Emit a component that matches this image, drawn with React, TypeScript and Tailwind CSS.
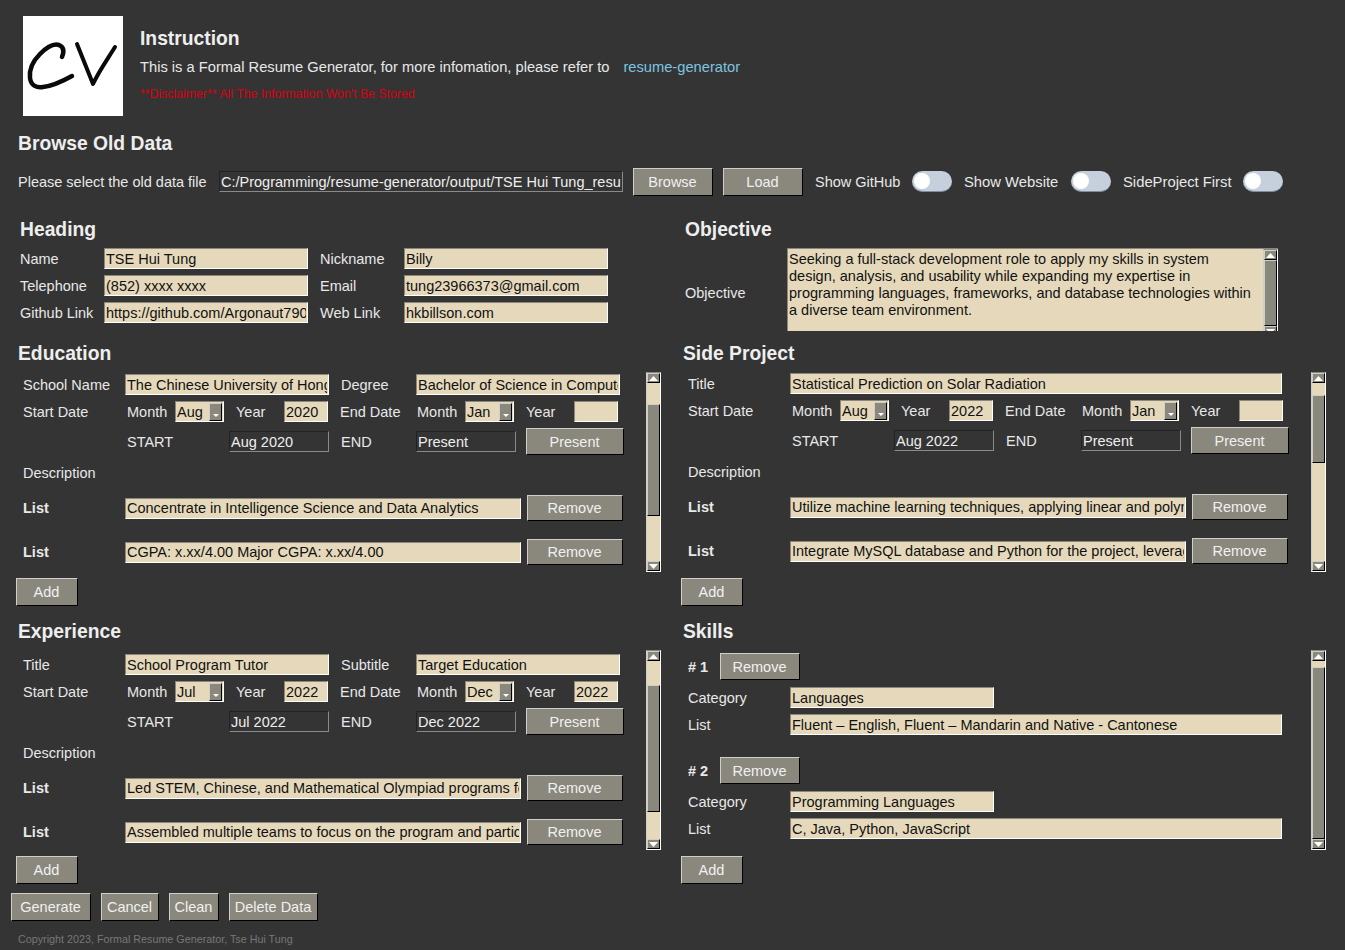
import React from 'react';

const Field = ({ value = '', className = '' }: { value?: string; className?: string }) => (
  <input
    readOnly
    value={value}
    className={`h-[21px] shrink-0 border border-t-[#8a887d] border-l-[#8a887d] border-r-white border-b-white bg-[#e6d9bb] px-px text-[#111] outline-none ${className}`}
  />
);

const ReadOnly = ({ value }: { value: string }) => (
  <input
    readOnly
    value={value}
    className="h-[21px] w-[100px] shrink-0 border border-t-[#222] border-l-[#222] border-r-[#8a8a8a] border-b-[#8a8a8a] bg-[#343434] px-px text-[#eee] outline-none"
  />
);

const Btn = ({ children, className = '' }: { children: React.ReactNode; className?: string }) => (
  <button className={`shrink-0 border border-t-[#cfcec8] border-l-[#cfcec8] border-r-black border-b-black bg-[#8a887d] pr-px text-[#f0f0f0] ${className}`}>
    {children}
  </button>
);

// label next to a 21px field, sits 1px lower than plain centering gives
const Lbl = ({ children, className = '' }: { children: React.ReactNode; className?: string }) => (
  <span className={`shrink-0 whitespace-nowrap pt-[2px] ${className}`}>{children}</span>
);

const Arrow = ({ up = false }: { up?: boolean }) => (
  <svg width="11" height="7" viewBox="0 0 11 7">
    <path d={up ? 'M5.5 1L10 6H1z' : 'M1 1h9L5.5 6z'} fill="#fff" />
  </svg>
);

const Select = ({ value }: { value: string }) => (
  <div className="flex h-[21px] w-[49px] shrink-0 items-center justify-between border border-t-[#8a887d] border-l-[#8a887d] border-r-white border-b-white bg-[#e6d9bb] pl-px pt-px text-[#111]">
    <span>{value}</span>
    <span className="mr-px -mt-px flex h-[18px] w-[13px] items-end justify-center border border-t-[#cfcec8] border-l-[#cfcec8] border-r-black border-b-black bg-[#8a887d] pb-px">
      <span className="mb-[2px] block h-0 w-0 border-x-[3px] border-t-[3px] border-x-transparent border-t-white" />
    </span>
  </div>
);

const Scrollbar = ({ before, thumb, h = 200 }: { before: number; thumb: number; h?: number }) => (
  <div className="flex w-[15px] shrink-0 flex-col border border-t-[#8a887d] border-l-[#cfcec8] border-r-white border-b-white bg-[#e6d9bb]" style={{ height: h }}>
    <div className="flex h-[10px] shrink-0 items-center justify-center border border-t-[#cfcec8] border-l-[#cfcec8] border-r-black border-b-black bg-[#8a887d]">
      <Arrow up />
    </div>
    <div className="shrink-0" style={{ height: before }} />
    <div className="shrink-0 border border-t-[#cfcec8] border-l-[#cfcec8] border-r-black border-b-black bg-[#8a887d]" style={{ height: thumb }} />
    <div className="flex-1" />
    <div className="flex h-[10px] shrink-0 items-center justify-center border border-t-[#cfcec8] border-l-[#cfcec8] border-r-black border-b-black bg-[#8a887d]">
      <Arrow />
    </div>
  </div>
);

const Toggle = () => (
  <div className="ml-3 flex h-[21px] w-10 shrink-0 items-center rounded-full border-b border-[#7f8ca0] bg-[#c6d0dd] pl-[2px]">
    <div className="h-[16px] w-[16px] rounded-full bg-white" />
  </div>
);

const H = ({ children, className = '' }: { children: React.ReactNode; className?: string }) => (
  <h2 className={`flex h-[30px] items-center text-[19.3px] font-bold text-[#eee] ${className}`}>{children}</h2>
);

const AddBtn = () => <Btn className="mt-[6px] -ml-[2px] block h-[28px] w-[62px]">Add</Btn>;

type EntryProps = {
  first: [string, string];
  second?: [string, string];
  startMonth: string;
  startYear: string;
  endMonth: string;
  endYear: string;
  start: string;
  end: string;
  list: string[];
  top: number;
  before: number;
  thumb: number;
};

const Entry = ({ first, second, startMonth, startYear, endMonth, endYear, start, end, list, top, before, thumb }: EntryProps) => (
  <div className="flex h-[200px] pl-[5px]">
    <div className="w-[623px] shrink-0" style={{ paddingTop: top }}>
      <div className="flex items-center">
        <Lbl className="w-[102px]">{first[0]}</Lbl>
        {second ? (
          <>
            <Field value={first[1]} className="w-[204px]" />
            <Lbl className="ml-3 w-[75px]">{second[0]}</Lbl>
            <Field value={second[1]} className="w-[204px]" />
          </>
        ) : (
          <Field value={first[1]} className="w-[492px]" />
        )}
      </div>
      <div className="mt-[6px] flex items-center">
        <Lbl className="w-[104px]">Start Date</Lbl>
        <Lbl className="w-[48px]">Month</Lbl>
        <Select value={startMonth} />
        <Lbl className="ml-3 w-[48px]">Year</Lbl>
        <Field value={startYear} className="w-[44px]" />
        <Lbl className="ml-3 w-[77px]">End Date</Lbl>
        <Lbl className="w-[48px]">Month</Lbl>
        <Select value={endMonth} />
        <Lbl className="ml-3 w-[48px]">Year</Lbl>
        <Field value={endYear} className="w-[44px]" />
      </div>
      <div className="mt-[6px] flex items-center pl-[104px]">
        <Lbl className="w-[102px]">START</Lbl>
        <ReadOnly value={start} />
        <Lbl className="ml-3 w-[75px]">END</Lbl>
        <ReadOnly value={end} />
        <Btn className="ml-[10px] h-[27px] w-[98px] pt-[2px]">Present</Btn>
      </div>
      <div className="mt-[9px] flex h-[18px] items-center">Description</div>
      {list.map((item, i) => (
        <div key={i} className={`flex items-center ${i === 0 ? 'mt-[13px]' : 'mt-[18px]'}`}>
          <span className="w-[102px] shrink-0 font-bold">List</span>
          <Field value={item} className="w-[396px]" />
          <Btn className="ml-[6px] h-[26px] w-[96px]">Remove</Btn>
        </div>
      ))}
    </div>
    <Scrollbar before={before} thumb={thumb} />
  </div>
);

const SkillGroup = ({ n, category, list, className = '' }: { n: number; category: string; list: string; className?: string }) => (
  <div className={className}>
    <div className="flex items-center">
      <Lbl className="w-[32px] font-bold"># {n}</Lbl>
      <Btn className="h-[27px] w-[80px] pt-[2px]">Remove</Btn>
    </div>
    <div className="mt-[7px] flex items-center">
      <Lbl className="w-[102px]">Category</Lbl>
      <Field value={category} className="w-[204px]" />
    </div>
    <div className="mt-[6px] flex items-center">
      <Lbl className="w-[102px]">List</Lbl>
      <Field value={list} className="w-[492px]" />
    </div>
  </div>
);

const Logo = () => (
  <div className="h-[100px] w-[100px] shrink-0 bg-white">
    <svg width="100" height="100" viewBox="0 0 100 100" fill="none" stroke="#0a0a0a" strokeLinecap="round" strokeLinejoin="round">
      <path strokeWidth="4.5" d="M39 41C41 36 41 31 36 29C30 27 22 33 17 38C10 45 6 54 7 62C8 70 14 72 20 71C30 70 40 65 49 60" />
      <path strokeWidth="4" d="M54 28L70 68C76 55 84 44 92 31" />
    </svg>
  </div>
);

const App = () => {
  return (
    <div className="h-[950px] overflow-hidden bg-[#343434] text-[14.5px] leading-[17px] text-[#e8e8e8] font-['Liberation_Sans',Arial,sans-serif]">
      <div className="flex pl-[23px] pt-4">
        <Logo />
        <div className="pl-[17px]">
          <h1 className="mt-[9px] text-[19.3px] font-bold leading-[28px] text-[#eee]">Instruction</h1>
          <p className="mt-[6px] flex text-[14.7px]">
            <span>This is a Formal Resume Generator, for more infomation, please refer to</span>
            <span className="ml-[14px] text-[#7ec4e0]">resume-generator</span>
          </p>
          <p className="mt-[10px] text-[12.3px] text-[#d90010]">**Disclaimer** All The Information Won't Be Stored</p>
        </div>
      </div>

      <div className="pl-[18px]">
        <H className="mt-3">Browse Old Data</H>
        <div className="mt-[9px] flex h-[29px] items-center">
          <Lbl className="w-[201px]">Please select the old data file</Lbl>
          <input
            readOnly
            value="C:/Programming/resume-generator/output/TSE Hui Tung_resume.json"
            className="h-[21px] w-[404px] shrink-0 border border-t-[#222] border-l-[#222] border-r-[#8a8a8a] border-b-[#8a8a8a] bg-[#343434] px-px text-[#eee] outline-none"
          />
          <Btn className="ml-[10px] h-[28px] w-[80px] pt-[2px]">Browse</Btn>
          <Btn className="ml-[10px] h-[28px] w-[80px] pt-[2px]">Load</Btn>
          <Lbl className="ml-[12px] w-[85px]">Show GitHub</Lbl>
          <Toggle />
          <Lbl className="ml-3 w-[95px] text-[14.8px]">Show Website</Lbl>
          <Toggle />
          <Lbl className="ml-3 w-[108px] text-[14.8px]">SideProject First</Lbl>
          <Toggle />
        </div>
      </div>

      <div className="mt-[18px] flex">
        <div className="w-[665px] shrink-0 pl-[18px]">
          <div className="h-[124px]">
            <H className="pl-[2px]">Heading</H>
            <div className="mt-[4px] flex flex-col gap-[6px] pl-[2px]">
              {[
                ['Name', 'TSE Hui Tung', 'Nickname', 'Billy'],
                ['Telephone', '(852) xxxx xxxx', 'Email', 'tung23966373@gmail.com'],
                ['Github Link', 'https://github.com/Argonaut790', 'Web Link', 'hkbillson.com'],
              ].map((r) => (
                <div key={r[0]} className="flex items-center">
                  <Lbl className="w-[84px]">{r[0]}</Lbl>
                  <Field value={r[1]} className="w-[204px]" />
                  <Lbl className="ml-3 w-[84px]">{r[2]}</Lbl>
                  <Field value={r[3]} className="w-[204px]" />
                </div>
              ))}
            </div>
          </div>
          <H>Education</H>
          <div className="mt-[4px]">
            <Entry
              first={['School Name', 'The Chinese University of Hong Kong']}
              second={['Degree', 'Bachelor of Science in Computer Science']}
              startMonth="Aug"
              startYear="2020"
              endMonth="Jan"
              endYear=""
              start="Aug 2020"
              end="Present"
              list={['Concentrate in Intelligence Science and Data Analytics', 'CGPA: x.xx/4.00 Major CGPA: x.xx/4.00']}
              top={2}
              before={21}
              thumb={112}
            />
          </div>
          <AddBtn />
          <H className="mt-[10px]">Experience</H>
          <div className="mt-[4px]">
            <Entry
              first={['Title', 'School Program Tutor']}
              second={['Subtitle', 'Target Education']}
              startMonth="Jul"
              startYear="2022"
              endMonth="Dec"
              endYear="2022"
              start="Jul 2022"
              end="Dec 2022"
              list={['Led STEM, Chinese, and Mathematical Olympiad programs for students', 'Assembled multiple teams to focus on the program and participants']}
              top={4}
              before={24}
              thumb={127}
            />
          </div>
          <AddBtn />
        </div>

        <div className="pl-[18px]">
          <div className="h-[124px]">
            <H className="pl-[2px]">Objective</H>
            <div className="mt-[4px] flex items-center pl-[2px]">
              <span className="w-[102px] shrink-0 pt-[8px]">Objective</span>
              <div className="flex h-[83px] w-[491px] overflow-hidden border-t border-l border-t-[#8a887d] border-l-[#8a887d] bg-[#e6d9bb]">
                <div className="w-[475px] shrink-0">
                  <p className="w-[468px] pl-px pt-[2px] text-[#111]">
                    Seeking a full-stack development role to apply my skills in system design, analysis, and usability while expanding my expertise in programming languages, frameworks, and database technologies within a diverse team environment.
                  </p>
                </div>
                <Scrollbar before={0} thumb={66} h={88} />
              </div>
            </div>
          </div>
          <H>Side Project</H>
          <div className="mt-[4px]">
            <Entry
              first={['Title', 'Statistical Prediction on Solar Radiation']}
              startMonth="Aug"
              startYear="2022"
              endMonth="Jan"
              endYear=""
              start="Aug 2022"
              end="Present"
              list={['Utilize machine learning techniques, applying linear and polynomial regression', 'Integrate MySQL database and Python for the project, leveraging data pipelines']}
              top={1}
              before={12}
              thumb={68}
            />
          </div>
          <AddBtn />
          <H className="mt-[10px]">Skills</H>
          <div className="mt-[4px] flex h-[200px] pl-[5px]">
            <div className="w-[623px] shrink-0 pt-[3px]">
              <SkillGroup n={1} category="Languages" list="Fluent – English, Fluent – Mandarin and Native - Cantonese" />
              <SkillGroup n={2} category="Programming Languages" list="C, Java, Python, JavaScript" className="mt-[22px]" />
            </div>
            <Scrollbar before={6} thumb={172} />
          </div>
          <AddBtn />
        </div>
      </div>

      <div className="mt-[9px] flex pl-[11px]">
        <Btn className="h-[28px] w-[80px]">Generate</Btn>
        <Btn className="ml-[10px] h-[28px] w-[58px]">Cancel</Btn>
        <Btn className="ml-[10px] h-[28px] w-[50px]">Clean</Btn>
        <Btn className="ml-[10px] h-[28px] w-[89px]">Delete Data</Btn>
      </div>
      <p className="mt-[10px] pl-[18px] text-[10.75px] text-[#777]">Copyright 2023, Formal Resume Generator, Tse Hui Tung</p>
    </div>
  );
};

export default App;
